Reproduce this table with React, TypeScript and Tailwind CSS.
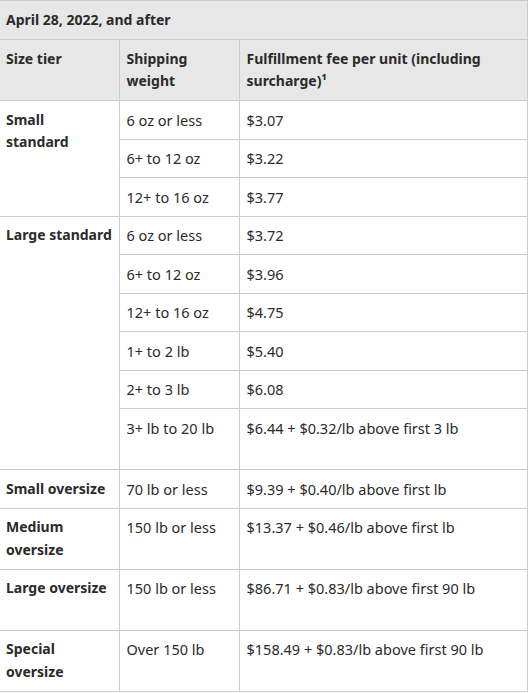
const ROWS: { tier?: string; span?: number; weight: string; fee: string; tall?: boolean }[] = [
  { tier: "Small\nstandard", span: 3, weight: "6 oz or less", fee: "$3.07" },
  { weight: "6+ to 12 oz", fee: "$3.22" },
  { weight: "12+ to 16 oz", fee: "$3.77" },
  { tier: "Large standard", span: 6, weight: "6 oz or less", fee: "$3.72" },
  { weight: "6+ to 12 oz", fee: "$3.96" },
  { weight: "12+ to 16 oz", fee: "$4.75" },
  { weight: "1+ to 2 lb", fee: "$5.40" },
  { weight: "2+ to 3 lb", fee: "$6.08" },
  { weight: "3+ lb to 20 lb", fee: "$6.44 + $0.32/lb above first 3 lb", tall: true },
  { tier: "Small oversize", span: 1, weight: "70 lb or less", fee: "$9.39 + $0.40/lb above first lb" },
  { tier: "Medium\noversize", span: 1, weight: "150 lb or less", fee: "$13.37 + $0.46/lb above first lb" },
  { tier: "Large oversize", span: 1, weight: "150 lb or less", fee: "$86.71 + $0.83/lb above first 90 lb", tall: true },
  { tier: "Special\noversize", span: 1, weight: "Over 150 lb", fee: "$158.49 + $0.83/lb above first 90 lb" },
];

const cell = "border border-[#cccccc] align-top px-[7px] py-[7.5px] leading-[22.5px]";
const first = "border-l-0 pl-[6px] pr-[2px]";

export default function App() {
  return (
    <div className="bg-white min-h-screen font-['Noto_Sans',sans-serif] text-[14.5px] text-[#2b2b2b]">
      <table className="table-fixed border-collapse w-[528px]">
        <colgroup>
          <col className="w-[119px]" />
          <col className="w-[120px]" />
          <col />
        </colgroup>
        <thead>
          <tr className="bg-[#e7e7e7]">
            <th colSpan={3} className={`${cell} ${first} text-left font-bold text-[14px] pt-[8px]`}>
              April 28, 2022, and after
            </th>
          </tr>
          <tr className="bg-[#e7e7e7]">
            <th className={`${cell} ${first} text-left font-bold text-[14px]`}>Size tier</th>
            <th className={`${cell} text-left font-bold text-[14px]`}>Shipping weight</th>
            <th className={`${cell} text-left font-bold text-[14px]`}>
              Fulfillment fee per unit (including surcharge)¹
            </th>
          </tr>
        </thead>
        <tbody>
          {ROWS.map((r, i) => (
            <tr key={i}>
              {r.tier && (
                <td rowSpan={r.span} className={`${cell} ${first} font-bold text-[14px] whitespace-pre`}>
                  {r.tier}
                </td>
              )}
              <td className={cell}>{r.weight}</td>
              <td className={cell}>
                {r.fee}
                {r.tall && <br />}
                {r.tall && <span>&nbsp;</span>}
              </td>
            </tr>
          ))}
        </tbody>
      </table>
    </div>
  );
}
